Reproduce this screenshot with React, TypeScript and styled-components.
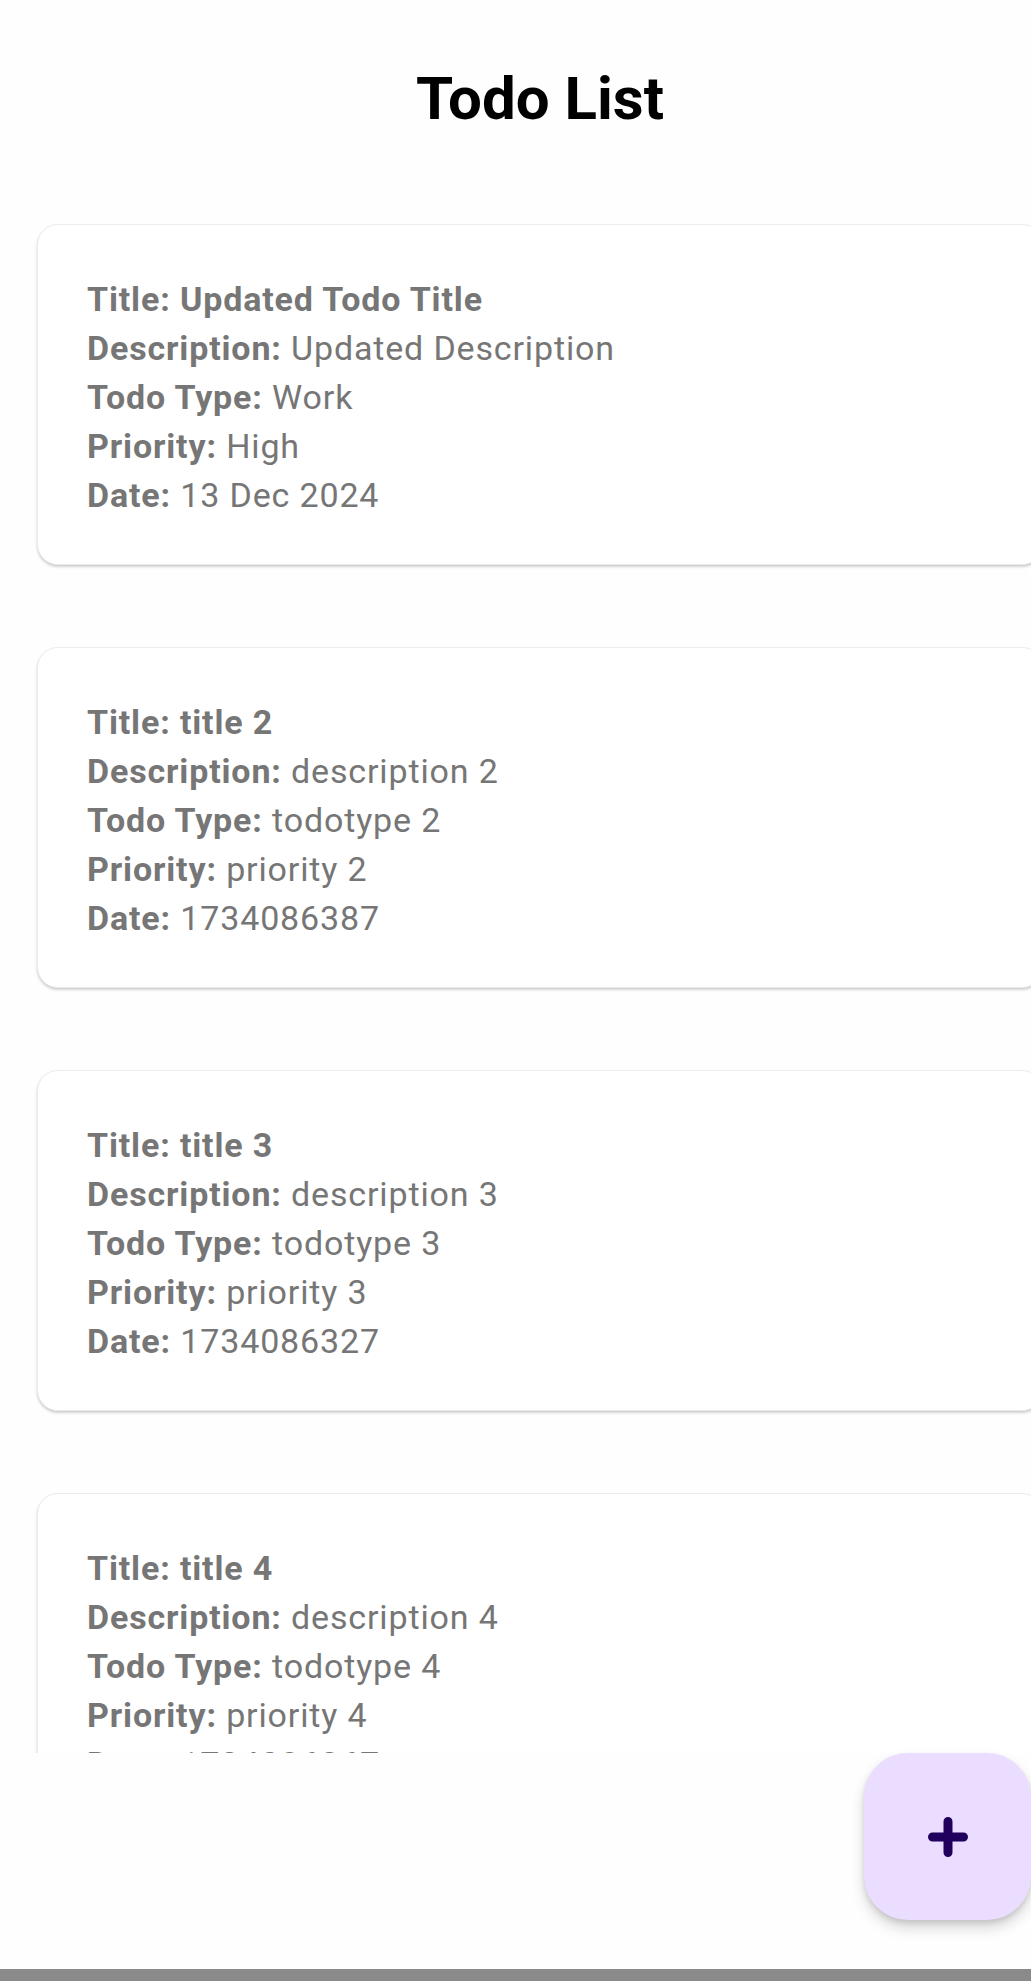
import React from "react";
import styled, { createGlobalStyle } from "styled-components";

const GlobalStyle = createGlobalStyle`
  html, body {
    margin: 0;
    padding: 0;
    background: #fefefe;
    overflow: hidden;
  }
  body {
    font-family: Roboto, "Noto Sans", "Liberation Sans", sans-serif;
  }
  * { box-sizing: border-box; }
`;

const Screen = styled.div`
  width: 1031px;
  height: 1981px;
  display: flex;
  flex-direction: column;
  overflow: hidden;
  background: #fefefe;
`;

const Header = styled.header`
  padding-top: 64px;
  padding-left: 49px;
  display: flex;
  justify-content: center;
`;

const Title = styled.h1`
  margin: 0;
  font-family: Roboto, "Noto Sans", sans-serif;
  font-weight: 700;
  font-size: 60px;
  line-height: 70px;
  color: #000;
`;

const ListArea = styled.main`
  height: 1619px;
  overflow: hidden;
  padding-top: 90px;
  display: flex;
  flex-direction: column;
  gap: 82px;
`;

const Card = styled.article`
  flex: none;
  margin-left: 37px;
  width: 1006px;
  height: 341px;
  background: #ffffff;
  border-radius: 21px;
  border: 1px solid #ececec;
  box-shadow: 0 2px 3px rgba(0, 0, 0, 0.16), 0 1px 1px rgba(0, 0, 0, 0.06);
  padding: 50px 0 44px 49px;
  display: flex;
  flex-direction: column;
`;

const Line = styled.div<{ $bold?: boolean }>`
  font-family: Roboto, "Noto Sans", sans-serif;
  font-size: 34px;
  line-height: 49px;
  letter-spacing: 0.85px;
  color: #767676;
  font-weight: ${(p) => (p.$bold ? 700 : 400)};
  white-space: nowrap;
`;

const Label = styled.span`
  font-weight: 700;
`;

const Footer = styled.footer`
  height: 216px;
  display: flex;
  justify-content: flex-end;
  align-items: flex-start;
`;

const Fab = styled.button`
  width: 167px;
  height: 167px;
  border: none;
  border-radius: 44px;
  background: #eaddff;
  box-shadow: 0 8px 14px rgba(0, 0, 0, 0.16), 0 3px 5px rgba(0, 0, 0, 0.1);
  display: flex;
  align-items: center;
  justify-content: center;
  padding: 0;
  cursor: pointer;
`;

const NavBar = styled.div`
  height: 12px;
  background: #8a8a8a;
`;

type Todo = {
  title: string;
  description: string;
  type: string;
  priority: string;
  date: string;
};

const todos: Todo[] = [
  {
    title: "Updated Todo Title",
    description: "Updated Description",
    type: "Work",
    priority: "High",
    date: "13 Dec 2024",
  },
  {
    title: "title 2",
    description: "description 2",
    type: "todotype 2",
    priority: "priority 2",
    date: "1734086387",
  },
  {
    title: "title 3",
    description: "description 3",
    type: "todotype 3",
    priority: "priority 3",
    date: "1734086327",
  },
  {
    title: "title 4",
    description: "description 4",
    type: "todotype 4",
    priority: "priority 4",
    date: "1734086267",
  },
];

const PlusIcon = () => (
  <svg width="40" height="40" viewBox="0 0 40 40" aria-hidden="true">
    <path
      d="M20 4.5V35.5M4.5 20H35.5"
      stroke="#21005d"
      strokeWidth="9"
      strokeLinecap="round"
      fill="none"
    />
  </svg>
);

export default function App() {
  return (
    <Screen>
      <GlobalStyle />
      <Header>
        <Title>Todo List</Title>
      </Header>
      <ListArea>
        {todos.map((t, i) => (
          <Card key={i}>
            <Line $bold>Title: {t.title}</Line>
            <Line>
              <Label>Description:</Label> {t.description}
            </Line>
            <Line>
              <Label>Todo Type:</Label> {t.type}
            </Line>
            <Line>
              <Label>Priority:</Label> {t.priority}
            </Line>
            <Line>
              <Label>Date:</Label> {t.date}
            </Line>
          </Card>
        ))}
      </ListArea>
      <Footer>
        <Fab aria-label="Add todo">
          <PlusIcon />
        </Fab>
      </Footer>
      <NavBar />
    </Screen>
  );
}
